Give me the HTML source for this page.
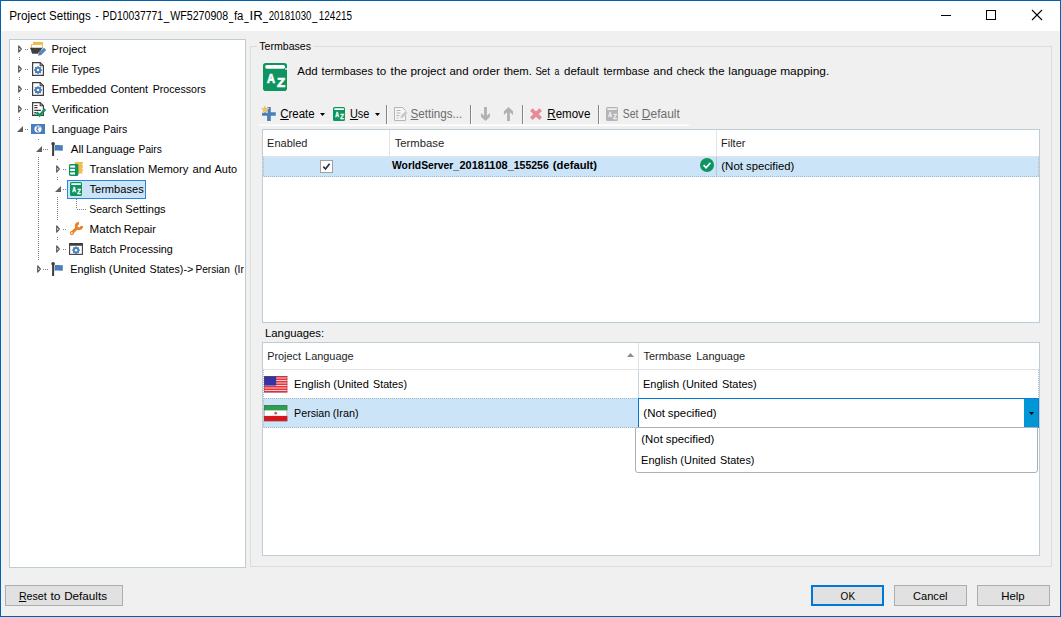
<!DOCTYPE html>
<html lang="en">
<head>
<meta charset="utf-8">
<title>Project Settings</title>
<style>
html,body{margin:0;padding:0;}
body{width:1061px;height:617px;overflow:hidden;background:#f0f0f0;font-family:"Liberation Sans",sans-serif;font-size:11.5px;color:#000;}
#page{position:absolute;left:0;top:0;width:1061px;height:617px;overflow:hidden;background:#f0f0f0;}
header,nav,main,section,footer{display:block;position:static;margin:0;padding:0;}
.a{position:absolute;}
.t{position:absolute;white-space:pre;line-height:14px;font-size:11.5px;transform-origin:0 0;display:block;}
.t u{text-decoration:none;border-bottom:1px solid currentColor;display:inline-block;height:12px;}
svg{position:absolute;overflow:visible;}
.clip{position:absolute;overflow:hidden;}
</style>
</head>
<body>
<div id="page">
<header id="titlebar">
<div class="a" style="left:0px;top:0px;width:1061px;height:617px;box-sizing:border-box;border:1px solid #0063b1;"></div>
<div class="a" style="left:1px;top:1px;width:1059px;height:30px;background:#fff;"></div>
<div class="l"><span class="t" style="left:9px;top:9px;transform:matrix(0.9813,0,0,1,0.18,0);font-size:12px;">Project </span><span class="t" style="left:49px;top:9px;transform:matrix(0.9620,0,0,1,0.08,0);font-size:12px;">Settings </span><span class="t" style="left:95px;top:9px;transform:matrix(0.7996,0,0,1,0.61,0);font-size:12px;">- </span><span class="t" style="left:102px;top:9px;transform:matrix(0.8620,0,0,1,0.54,0);font-size:12px;">PD10037771</span><span class="t" style="left:163px;top:9px;transform:matrix(0.8218,0,0,1,0.64,0);font-size:12px;">_</span><span class="t" style="left:170px;top:9px;transform:matrix(0.8873,0,0,1,0.2,0);font-size:12px;">WF5270908</span><span class="t" style="left:228px;top:9px;transform:matrix(0.6347,0,0,1,0.96,0);font-size:12px;">_</span><span class="t" style="left:233px;top:9px;transform:matrix(0.9519,0,0,1,0.9,0);font-size:12px;">fa</span><span class="t" style="left:244px;top:9px;transform:matrix(0.6569,0,0,1,0.36,0);font-size:12px;">_</span><span class="t" style="left:249px;top:9px;transform:matrix(1.0936,0,0,1,0.52,0);font-size:12px;">IR</span><span class="t" style="left:262px;top:9px;transform:matrix(0.7416,0,0,1,0.9,0);font-size:12px;">_</span><span class="t" style="left:268px;top:9px;transform:matrix(0.7998,0,0,1,0.66,0);font-size:12px;">20181030</span><span class="t" style="left:312px;top:9px;transform:matrix(0.7549,0,0,1,0.14,0);font-size:12px;">_</span><span class="t" style="left:318px;top:9px;transform:matrix(0.8283,0,0,1,0.8,0);font-size:12px;">124215</span></div>
<svg style="left:0px;top:0px" width="1061" height="31" viewBox="0 0 1061 31" preserveAspectRatio="none"><path d="M941 15.5h10" stroke="#000" stroke-width="1" fill="none"/><rect x="986.5" y="10.5" width="9" height="9" stroke="#000" stroke-width="1" fill="none"/><path d="M1032 10l10 10M1042 10l-10 10" stroke="#000" stroke-width="1.1" fill="none"/></svg>
</header>
<nav id="settings-tree" role="tree">
<div class="a" style="left:9px;top:39px;width:237px;height:529px;background:#fff;box-sizing:border-box;border:1px solid #becdd5;"></div>
<div class="a" style="left:67px;top:180px;width:79px;height:19px;background:#cce4f7;box-sizing:border-box;border:1px solid #2586dc;"></div>
<svg style="left:18px;top:44px" width="5" height="10" viewBox="0 0 5 10" preserveAspectRatio="none"><path d="M0.7 1.9L3.3 5L0.7 8.1z" fill="#fff" stroke="#5a5a5a" stroke-width="1.2" stroke-linejoin="round"/></svg>
<svg style="left:30px;top:41px" width="16" height="16" viewBox="0 0 16 16" preserveAspectRatio="none"><path d="M3 0.9h10v3H3z" fill="#efc050"/><path d="M4 1.75h1.3M6.1 1.75h1.3M8.2 1.75h1.3" stroke="#d9a83a" stroke-width="0.7"/><path d="M1.55 7V3.55h10.9V7" fill="#fff" stroke="#efc050" stroke-width="1.1"/><path d="M0 6.8h12.4v0.9h-0.6l-1.3 4.4q-0.2 0.6-0.8 0.6H2.6q-0.6 0-0.8-0.6L0.6 7.7H0z" fill="#3f3f3f"/><path d="M8.1 14.8l0.9-3.1 5-5 2.2 2.2-5 5z" fill="#4a7ebb" stroke="#fff" stroke-width="0.9" paint-order="stroke"/><path d="M10.1 11l2 2M11.5 9.6l2 2M12.9 8.2l2 2" stroke="#86a9d3" stroke-width="0.5"/></svg>
<div class="l"><span class="t" style="left:51px;top:42px;transform:matrix(0.9652,0,0,1,0.51,0);">Project</span></div>
<svg style="left:18px;top:64px" width="5" height="10" viewBox="0 0 5 10" preserveAspectRatio="none"><path d="M0.7 1.9L3.3 5L0.7 8.1z" fill="#fff" stroke="#5a5a5a" stroke-width="1.2" stroke-linejoin="round"/></svg>
<svg style="left:30px;top:61px" width="16" height="16" viewBox="0 0 16 16" preserveAspectRatio="none"><path d="M2.6 1.6h7.6l3.2 3.2v9.6H2.6z" fill="#fff" stroke="#3f3f3f" stroke-width="1.2"/><path d="M10.2 1.6v3.2h3.2" fill="none" stroke="#3f3f3f" stroke-width="1.1"/><circle cx="8" cy="9.1" r="2.3" fill="none" stroke="#4a7ebb" stroke-width="1.84"/><g stroke="#4a7ebb" stroke-width="1.61"><path d="M8 5.14V13.06" transform="rotate(0 8 9.1)"/><path d="M8 5.14V13.06" transform="rotate(45 8 9.1)"/><path d="M8 5.14V13.06" transform="rotate(90 8 9.1)"/><path d="M8 5.14V13.06" transform="rotate(135 8 9.1)"/></g><circle cx="8" cy="9.1" r="1.26" fill="#fff"/></svg>
<div class="l"><span class="t" style="left:51px;top:62px;transform:matrix(0.9291,0,0,1,0.51,0);">File Types</span></div>
<svg style="left:18px;top:84px" width="5" height="10" viewBox="0 0 5 10" preserveAspectRatio="none"><path d="M0.7 1.9L3.3 5L0.7 8.1z" fill="#fff" stroke="#5a5a5a" stroke-width="1.2" stroke-linejoin="round"/></svg>
<svg style="left:30px;top:81px" width="16" height="16" viewBox="0 0 16 16" preserveAspectRatio="none"><path d="M2.6 1.6h7.6l3.2 3.2v9.6H2.6z" fill="#fff" stroke="#3f3f3f" stroke-width="1.2"/><path d="M10.2 1.6v3.2h3.2" fill="none" stroke="#3f3f3f" stroke-width="1.1"/><circle cx="8" cy="9.1" r="2.3" fill="none" stroke="#4a7ebb" stroke-width="1.84"/><g stroke="#4a7ebb" stroke-width="1.61"><path d="M8 5.14V13.06" transform="rotate(0 8 9.1)"/><path d="M8 5.14V13.06" transform="rotate(45 8 9.1)"/><path d="M8 5.14V13.06" transform="rotate(90 8 9.1)"/><path d="M8 5.14V13.06" transform="rotate(135 8 9.1)"/></g><circle cx="8" cy="9.1" r="1.26" fill="#fff"/></svg>
<div class="l"><span class="t" style="left:51px;top:82px;transform:matrix(0.9874,0,0,1,0.42,0);">Embedded </span><span class="t" style="left:110px;top:82px;transform:matrix(0.9352,0,0,1,0.41,0);">Content </span><span class="t" style="left:152px;top:82px;transform:matrix(0.9214,0,0,1,0.71,0);">Processors</span></div>
<svg style="left:18px;top:104px" width="5" height="10" viewBox="0 0 5 10" preserveAspectRatio="none"><path d="M0.7 1.9L3.3 5L0.7 8.1z" fill="#fff" stroke="#5a5a5a" stroke-width="1.2" stroke-linejoin="round"/></svg>
<svg style="left:30px;top:101px" width="16" height="16" viewBox="0 0 16 16" preserveAspectRatio="none"><path d="M2.6 1.6h7.6l3.2 3.2v9.6H2.6z" fill="#fff" stroke="#3f3f3f" stroke-width="1.2"/><path d="M10.2 1.6v3.2h3.2" fill="none" stroke="#3f3f3f" stroke-width="1.1"/><path d="M4.3 4.5h3.2M4.3 6.6h3.2M4.3 9.4h6.6M4.3 11.6h2M4.3 13.2h1.2" stroke="#3f3f3f" stroke-width="1.1"/><path d="M6.6 11.3l3 3.2 5.6-6.4" fill="none" stroke="#0d945f" stroke-width="2.5"/></svg>
<div class="l"><span class="t" style="left:51px;top:102px;transform:matrix(1.0094,0,0,1,0.98,0);">Verification</span></div>
<svg style="left:17px;top:126px" width="6" height="6" viewBox="0 0 6 6" preserveAspectRatio="none"><path d="M6 0V6H0z" fill="#5f5f5f"/></svg>
<svg style="left:30px;top:121px" width="16" height="16" viewBox="0 0 16 16" preserveAspectRatio="none"><rect x="1" y="3" width="14" height="10" fill="#4a7ebb"/><circle cx="8" cy="8" r="3.6" fill="#fff"/><path d="M6.4 5.6c2.2 0.4 2 1.6 0.8 2.2s0.4 1.6 1.6 2.8" stroke="#4a7ebb" stroke-width="1.2" fill="none"/><path d="M9.4 5.2l0.8 1.6" stroke="#4a7ebb" stroke-width="0.9" fill="none"/></svg>
<div class="l"><span class="t" style="left:51px;top:122px;transform:matrix(0.9396,0,0,1,0.87,0);">Language </span><span class="t" style="left:103px;top:122px;transform:matrix(0.9116,0,0,1,0.26,0);">Pairs</span></div>
<svg style="left:36px;top:146px" width="6" height="6" viewBox="0 0 6 6" preserveAspectRatio="none"><path d="M6 0V6H0z" fill="#5f5f5f"/></svg>
<svg style="left:50px;top:141px" width="16" height="16" viewBox="0 0 16 16" preserveAspectRatio="none"><circle cx="3.1" cy="2.7" r="1.8" fill="#3f3f3f"/><rect x="2.1" y="2.7" width="2" height="12.3" fill="#3f3f3f"/><path d="M4.6 4.3c2.6-0.9 5 0.5 8.2-0.4v5.6c-3.2 0.9-5.6-0.5-8.2 0.4z" fill="#4a7ebb"/></svg>
<div class="l"><span class="t" style="left:70px;top:142px;transform:matrix(1.0041,0,0,1,0.79,0);">All </span><span class="t" style="left:86px;top:142px;transform:matrix(0.9546,0,0,1,0.01,0);">Language </span><span class="t" style="left:138px;top:142px;transform:matrix(0.8856,0,0,1,0.59,0);">Pairs</span></div>
<svg style="left:56px;top:164px" width="5" height="10" viewBox="0 0 5 10" preserveAspectRatio="none"><path d="M0.7 1.9L3.3 5L0.7 8.1z" fill="#fff" stroke="#5a5a5a" stroke-width="1.2" stroke-linejoin="round"/></svg>
<svg style="left:68px;top:161px" width="16" height="16" viewBox="0 0 16 16" preserveAspectRatio="none"><path d="M6.6 1h8.4v1.6a1 1 0 0 0 0 2v1.8a1 1 0 0 0 0 2v1.8a1 1 0 0 0 0 2v0.4h-8.4z" fill="#efc050"/><rect x="1" y="3" width="9.4" height="12" rx="1.4" fill="#0d945f"/><rect x="2.2" y="4.5" width="4.8" height="2.1" fill="#fff"/><rect x="2.2" y="7.95" width="4.8" height="2.1" fill="#fff"/><rect x="2.2" y="11.4" width="4.8" height="2.1" fill="#fff"/></svg>
<div class="l"><span class="t" style="left:89px;top:162px;transform:matrix(0.9739,0,0,1,0.41,0);">Translation </span><span class="t" style="left:147px;top:162px;transform:matrix(0.9765,0,0,1,0.88,0);">Memory </span><span class="t" style="left:192px;top:162px;transform:matrix(0.9745,0,0,1,0.52,0);">and </span><span class="t" style="left:214px;top:162px;transform:matrix(0.9484,0,0,1,0.58,0);">Auto</span></div>
<svg style="left:55px;top:186px" width="6" height="6" viewBox="0 0 6 6" preserveAspectRatio="none"><path d="M6 0V6H0z" fill="#5f5f5f"/></svg>
<svg style="left:68px;top:181px" width="16" height="16" viewBox="0 0 16 16" preserveAspectRatio="none"><rect x="2" y="1" width="12" height="14" rx="1.5" fill="#0d945f"/><rect x="3.2" y="2.15" width="9.8" height="1.75" rx="0.6" fill="#fff"/><g style="font:bold 7px 'Liberation Sans',sans-serif" fill="#fff" stroke="#fff" stroke-width="0.35"><text x="4.2" y="11.1" textLength="3.7" lengthAdjust="spacingAndGlyphs">A</text><text x="9.2" y="12.8" textLength="3.6" lengthAdjust="spacingAndGlyphs">Z</text></g></svg>
<div class="l"><span class="t" style="left:89px;top:182px;transform:matrix(0.9650,0,0,1,0.41,0);">Termbases</span></div>
<div class="l"><span class="t" style="left:89px;top:202px;transform:matrix(0.9121,0,0,1,0.16,0);">Search </span><span class="t" style="left:125px;top:202px;transform:matrix(0.9700,0,0,1,0.36,0);">Settings</span></div>
<svg style="left:56px;top:224px" width="5" height="10" viewBox="0 0 5 10" preserveAspectRatio="none"><path d="M0.7 1.9L3.3 5L0.7 8.1z" fill="#fff" stroke="#5a5a5a" stroke-width="1.2" stroke-linejoin="round"/></svg>
<svg style="left:68px;top:221px" width="16" height="16" viewBox="0 0 16 16" preserveAspectRatio="none"><path d="M3.9 12L9.4 6.5" stroke="#e98024" stroke-width="3" stroke-linecap="butt" fill="none"/><circle cx="3.85" cy="12.1" r="2.05" fill="#e98024"/><path d="M13.75 5.10A2.75 2.75 0 1 1 11.00 2.35" stroke="#e98024" stroke-width="2.7" fill="none"/><circle cx="3.85" cy="12.1" r="0.9" fill="#fff"/></svg>
<div class="l"><span class="t" style="left:89px;top:222px;transform:matrix(1.0085,0,0,1,0.58,0);">Match </span><span class="t" style="left:123px;top:222px;transform:matrix(0.9421,0,0,1,0.83,0);">Repair</span></div>
<svg style="left:56px;top:244px" width="5" height="10" viewBox="0 0 5 10" preserveAspectRatio="none"><path d="M0.7 1.9L3.3 5L0.7 8.1z" fill="#fff" stroke="#5a5a5a" stroke-width="1.2" stroke-linejoin="round"/></svg>
<svg style="left:68px;top:241px" width="16" height="16" viewBox="0 0 16 16" preserveAspectRatio="none"><rect x="1.6" y="2.6" width="12.8" height="10.8" fill="#fff" stroke="#3f3f3f" stroke-width="1.1"/><rect x="1.05" y="2.15" width="13.9" height="2.6" fill="#3f3f3f"/><circle cx="8.05" cy="9.2" r="2.2" fill="none" stroke="#4a7ebb" stroke-width="1.76"/><g stroke="#4a7ebb" stroke-width="1.54"><path d="M8.05 5.42V12.98" transform="rotate(0 8.05 9.2)"/><path d="M8.05 5.42V12.98" transform="rotate(45 8.05 9.2)"/><path d="M8.05 5.42V12.98" transform="rotate(90 8.05 9.2)"/><path d="M8.05 5.42V12.98" transform="rotate(135 8.05 9.2)"/></g><circle cx="8.05" cy="9.2" r="1.21" fill="#fff"/></svg>
<div class="l"><span class="t" style="left:89px;top:242px;transform:matrix(0.9051,0,0,1,0.67,0);">Batch </span><span class="t" style="left:119px;top:242px;transform:matrix(0.9347,0,0,1,0.57,0);">Processing</span></div>
<svg style="left:37px;top:264px" width="5" height="10" viewBox="0 0 5 10" preserveAspectRatio="none"><path d="M0.7 1.9L3.3 5L0.7 8.1z" fill="#fff" stroke="#5a5a5a" stroke-width="1.2" stroke-linejoin="round"/></svg>
<svg style="left:50px;top:261px" width="16" height="16" viewBox="0 0 16 16" preserveAspectRatio="none"><circle cx="3.1" cy="2.7" r="1.8" fill="#3f3f3f"/><rect x="2.1" y="2.7" width="2" height="12.3" fill="#3f3f3f"/><path d="M4.6 4.3c2.6-0.9 5 0.5 8.2-0.4v5.6c-3.2 0.9-5.6-0.5-8.2 0.4z" fill="#4a7ebb"/></svg>
<div class="clip" style="left:0;top:259px;width:244px;height:20px;">
<div class="l"><span class="t" style="left:70px;top:3px;transform:matrix(0.9406,0,0,1,0.35,0);">English </span><span class="t" style="left:108px;top:3px;transform:matrix(0.9878,0,0,1,0.86,0);">(United </span><span class="t" style="left:149px;top:3px;transform:matrix(0.9288,0,0,1,0.53,0);">States)</span><span class="t" style="left:183px;top:3px;transform:matrix(0.9419,0,0,1,0.44,0);">-&gt;</span><span class="t" style="left:195px;top:3px;transform:matrix(0.8815,0,0,1,0.4,0);">Persian </span><span class="t" style="left:234px;top:3px;transform:matrix(0.9004,0,0,1,0.16,0);">(Ir</span></div></div>
<svg style="left:0px;top:0px" width="260" height="300" viewBox="0 0 260 300" preserveAspectRatio="none"><g fill="#808080" shape-rendering="crispEdges"><rect x="25" y="49" width="1" height="1"/><rect x="27" y="49" width="1" height="1"/><rect x="25" y="69" width="1" height="1"/><rect x="27" y="69" width="1" height="1"/><rect x="25" y="89" width="1" height="1"/><rect x="27" y="89" width="1" height="1"/><rect x="25" y="109" width="1" height="1"/><rect x="27" y="109" width="1" height="1"/><rect x="25" y="129" width="1" height="1"/><rect x="27" y="129" width="1" height="1"/><rect x="43" y="149" width="1" height="1"/><rect x="45" y="149" width="1" height="1"/><rect x="47" y="149" width="1" height="1"/><rect x="63" y="169" width="1" height="1"/><rect x="65" y="169" width="1" height="1"/><rect x="63" y="189" width="1" height="1"/><rect x="65" y="189" width="1" height="1"/><rect x="63" y="229" width="1" height="1"/><rect x="65" y="229" width="1" height="1"/><rect x="63" y="249" width="1" height="1"/><rect x="65" y="249" width="1" height="1"/><rect x="43" y="269" width="1" height="1"/><rect x="45" y="269" width="1" height="1"/><rect x="47" y="269" width="1" height="1"/><rect x="19" y="57" width="1" height="1"/><rect x="19" y="59" width="1" height="1"/><rect x="19" y="77" width="1" height="1"/><rect x="19" y="79" width="1" height="1"/><rect x="19" y="97" width="1" height="1"/><rect x="19" y="99" width="1" height="1"/><rect x="19" y="117" width="1" height="1"/><rect x="19" y="119" width="1" height="1"/><rect x="38" y="139" width="1" height="1"/><rect x="38" y="157" width="1" height="1"/><rect x="38" y="159" width="1" height="1"/><rect x="38" y="161" width="1" height="1"/><rect x="38" y="163" width="1" height="1"/><rect x="38" y="165" width="1" height="1"/><rect x="38" y="167" width="1" height="1"/><rect x="38" y="169" width="1" height="1"/><rect x="38" y="171" width="1" height="1"/><rect x="38" y="173" width="1" height="1"/><rect x="38" y="175" width="1" height="1"/><rect x="38" y="177" width="1" height="1"/><rect x="38" y="179" width="1" height="1"/><rect x="38" y="181" width="1" height="1"/><rect x="38" y="183" width="1" height="1"/><rect x="38" y="185" width="1" height="1"/><rect x="38" y="187" width="1" height="1"/><rect x="38" y="189" width="1" height="1"/><rect x="38" y="191" width="1" height="1"/><rect x="38" y="193" width="1" height="1"/><rect x="38" y="195" width="1" height="1"/><rect x="38" y="197" width="1" height="1"/><rect x="38" y="199" width="1" height="1"/><rect x="38" y="201" width="1" height="1"/><rect x="38" y="203" width="1" height="1"/><rect x="38" y="205" width="1" height="1"/><rect x="38" y="207" width="1" height="1"/><rect x="38" y="209" width="1" height="1"/><rect x="38" y="211" width="1" height="1"/><rect x="38" y="213" width="1" height="1"/><rect x="38" y="215" width="1" height="1"/><rect x="38" y="217" width="1" height="1"/><rect x="38" y="219" width="1" height="1"/><rect x="38" y="221" width="1" height="1"/><rect x="38" y="223" width="1" height="1"/><rect x="38" y="225" width="1" height="1"/><rect x="38" y="227" width="1" height="1"/><rect x="38" y="229" width="1" height="1"/><rect x="38" y="231" width="1" height="1"/><rect x="38" y="233" width="1" height="1"/><rect x="38" y="235" width="1" height="1"/><rect x="38" y="237" width="1" height="1"/><rect x="38" y="239" width="1" height="1"/><rect x="38" y="241" width="1" height="1"/><rect x="38" y="243" width="1" height="1"/><rect x="38" y="245" width="1" height="1"/><rect x="38" y="247" width="1" height="1"/><rect x="38" y="249" width="1" height="1"/><rect x="38" y="251" width="1" height="1"/><rect x="38" y="253" width="1" height="1"/><rect x="38" y="255" width="1" height="1"/><rect x="38" y="257" width="1" height="1"/><rect x="38" y="259" width="1" height="1"/><rect x="57" y="159" width="1" height="1"/><rect x="57" y="177" width="1" height="1"/><rect x="57" y="179" width="1" height="1"/><rect x="57" y="197" width="1" height="1"/><rect x="57" y="237" width="1" height="1"/><rect x="57" y="239" width="1" height="1"/><rect x="57" y="199" width="1" height="1"/><rect x="57" y="201" width="1" height="1"/><rect x="57" y="203" width="1" height="1"/><rect x="57" y="205" width="1" height="1"/><rect x="57" y="207" width="1" height="1"/><rect x="57" y="209" width="1" height="1"/><rect x="57" y="211" width="1" height="1"/><rect x="57" y="213" width="1" height="1"/><rect x="57" y="215" width="1" height="1"/><rect x="57" y="217" width="1" height="1"/><rect x="57" y="219" width="1" height="1"/><rect x="76" y="199" width="1" height="1"/><rect x="76" y="201" width="1" height="1"/><rect x="76" y="203" width="1" height="1"/><rect x="76" y="205" width="1" height="1"/><rect x="76" y="207" width="1" height="1"/><rect x="77" y="209" width="1" height="1"/><rect x="79" y="209" width="1" height="1"/><rect x="81" y="209" width="1" height="1"/><rect x="83" y="209" width="1" height="1"/><rect x="85" y="209" width="1" height="1"/></g></svg>
</nav>
<main id="termbases-page">
<section id="intro">
<div class="a" style="left:250px;top:46px;width:802px;height:521px;box-sizing:border-box;border:1px solid #dcdcdc;"></div>
<div class="a" style="left:257px;top:40px;width:56px;height:14px;background:#f0f0f0;"></div>
<div class="l"><span class="t" style="left:259px;top:39px;transform:matrix(0.9176,0,0,1,0.32,0);">Termbases</span></div>
<svg style="left:263px;top:63px" width="24" height="28" viewBox="0 0 24 28" preserveAspectRatio="none"><rect width="24" height="28" rx="2.8" fill="#0d945f"/><rect x="2.1" y="2.1" width="20" height="3.7" rx="1.8" fill="#fff"/><rect x="22.1" y="5.2" width="1.9" height="1.4" fill="#f4faf7"/><g style="font:bold 13.7px 'Liberation Sans',sans-serif" fill="#fff" stroke="#fff" stroke-width="0.7"><text x="4" y="19.9" textLength="8" lengthAdjust="spacingAndGlyphs">A</text><text x="14" y="23.8" textLength="8.2" lengthAdjust="spacingAndGlyphs">Z</text></g></svg>
<div class="l"><span class="t" style="left:297px;top:64px;transform:matrix(0.9936,0,0,1,0.35,0);">Add </span><span class="t" style="left:321px;top:64px;transform:matrix(0.9567,0,0,1,0.57,0);">termbases </span><span class="t" style="left:376px;top:64px;transform:matrix(1.0090,0,0,1,0.57,0);">to </span><span class="t" style="left:390px;top:64px;transform:matrix(1.0256,0,0,1,0.62,0);">the </span><span class="t" style="left:410px;top:64px;transform:matrix(1.0201,0,0,1,0.45,0);">project </span><span class="t" style="left:449px;top:64px;transform:matrix(0.9924,0,0,1,0.45,0);">and </span><span class="t" style="left:472px;top:64px;transform:matrix(1.0229,0,0,1,0.39,0);">order </span><span class="t" style="left:503px;top:64px;transform:matrix(0.9801,0,0,1,0.69,0);">them. </span><span class="t" style="left:535px;top:64px;transform:matrix(0.8344,0,0,1,0.44,0);">Set </span><span class="t" style="left:554px;top:64px;transform:matrix(0.7587,0,0,1,0.48,0);">a </span><span class="t" style="left:564px;top:64px;transform:matrix(1.0001,0,0,1,0.04,0);">default </span><span class="t" style="left:603px;top:64px;transform:matrix(0.9551,0,0,1,0.5,0);">termbase </span><span class="t" style="left:653px;top:64px;transform:matrix(0.9980,0,0,1,0.36,0);">and </span><span class="t" style="left:676px;top:64px;transform:matrix(0.9436,0,0,1,0.43,0);">check </span><span class="t" style="left:708px;top:64px;transform:matrix(0.9901,0,0,1,0.68,0);">the </span><span class="t" style="left:728px;top:64px;transform:matrix(1.0236,0,0,1,0.31,0);">language </span><span class="t" style="left:780px;top:64px;transform:matrix(1.0369,0,0,1,0.19,0);">mapping.</span></div>
</section>
<div id="toolbar" role="toolbar">
<div class="a" style="left:259px;top:124px;width:430px;height:1px;background:#f8f9fb;"></div>
<div class="a" style="left:259px;top:125px;width:430px;height:1px;background:#fff;"></div>
<div class="a" style="left:386px;top:105px;width:1px;height:19px;background:#858585;"></div>
<div class="a" style="left:387px;top:105px;width:1px;height:19px;background:#fafafa;"></div>
<div class="a" style="left:470px;top:105px;width:1px;height:19px;background:#858585;"></div>
<div class="a" style="left:471px;top:105px;width:1px;height:19px;background:#fafafa;"></div>
<div class="a" style="left:522px;top:105px;width:1px;height:19px;background:#858585;"></div>
<div class="a" style="left:523px;top:105px;width:1px;height:19px;background:#fafafa;"></div>
<div class="a" style="left:598px;top:105px;width:1px;height:19px;background:#858585;"></div>
<div class="a" style="left:599px;top:105px;width:1px;height:19px;background:#fafafa;"></div>
<svg style="left:261px;top:105px" width="16" height="16" viewBox="0 0 16 16" preserveAspectRatio="none"><path d="M6.1 2h3.7v5.2h5v3.5h-5v5.2H6.1v-5.2H1V7.2h5.1z" fill="#4a7ebb" stroke="#f7f3ec" stroke-width="1.2" paint-order="stroke"/><path d="M3.95 0.55L5.07 3.01L7.75 3.31L5.76 5.14L6.30 7.79L3.95 6.45L1.60 7.79L2.14 5.14L0.15 3.31L2.83 3.01z" fill="#e9c265" stroke="#f3ecdc" stroke-width="1" paint-order="stroke"/></svg>
<div class="l"><span class="t" style="left:280px;top:107px;transform:matrix(0.9557,0,0,1,0.21,0);font-size:12px;"><u>C</u>reate</span></div>
<svg style="left:320px;top:113px" width="5" height="3" viewBox="0 0 5 3" preserveAspectRatio="none"><path d="M0 0h5L2.5 3z" fill="#000"/></svg>
<svg style="left:331px;top:106px" width="16" height="16" viewBox="0 0 16 16" preserveAspectRatio="none"><rect x="2" y="1" width="12" height="14" rx="1.5" fill="#0d945f"/><rect x="3.2" y="2.15" width="9.8" height="1.75" rx="0.6" fill="#fff"/><g style="font:bold 7px 'Liberation Sans',sans-serif" fill="#fff" stroke="#fff" stroke-width="0.35"><text x="4.2" y="11.1" textLength="3.7" lengthAdjust="spacingAndGlyphs">A</text><text x="9.2" y="12.8" textLength="3.6" lengthAdjust="spacingAndGlyphs">Z</text></g></svg>
<div class="l"><span class="t" style="left:349px;top:107px;transform:matrix(0.9107,0,0,1,0.95,0);font-size:12px;"><u>U</u>se</span></div>
<svg style="left:375px;top:113px" width="5" height="3" viewBox="0 0 5 3" preserveAspectRatio="none"><path d="M0 0h5L2.5 3z" fill="#000"/></svg>
<svg style="left:393px;top:106px" width="16" height="16" viewBox="0 0 16 16" preserveAspectRatio="none"><path d="M1.5 1.5h8l3 3v10h-11z" fill="#f6f6f6" stroke="#b4b4b4"/><path d="M3.5 4.5h4M3.5 7h4M3.5 9.5h3M3.5 12h2" stroke="#b4b4b4"/><path d="M7 12.6l0.9-3 4.6-4.6 2.1 2.1-4.6 4.6z" fill="#c6c6c6" stroke="#f0f0f0" stroke-width="0.5"/></svg>
<div class="l"><span class="t" style="left:410px;top:107px;transform:matrix(0.9684,0,0,1,0.61,0);font-size:12px;color:#6d6d6d;"><u>S</u>ettings...</span></div>
<svg style="left:480px;top:106px" width="11" height="16" viewBox="0 0 11 16" preserveAspectRatio="none"><path d="M4.1 1H6.9V9.8L9.9 6.9V10.8L5.5 15L1 10.8V6.9L4.1 9.8z" fill="#b1b1b1"/></svg>
<svg style="left:503px;top:106px" width="11" height="16" viewBox="0 0 11 16" preserveAspectRatio="none"><path d="M5.5 1L10 5.3V9.1L6.9 6.2V15H4.1V6.2L0.9 9.1V5.3z" fill="#b1b1b1"/></svg>
<svg style="left:529px;top:107px" width="14" height="14" viewBox="0 0 14 14" preserveAspectRatio="none"><path d="M2.3 2.600l9.4 9M11.7 2.600l-9.4 9" stroke="#e8899a" stroke-width="3.6" fill="none"/></svg>
<div class="l"><span class="t" style="left:547px;top:107px;transform:matrix(0.9609,0,0,1,0.36,0);font-size:12px;"><u>R</u>emove</span></div>
<svg style="left:604px;top:106px" width="16" height="16" viewBox="0 0 16 16" preserveAspectRatio="none"><rect x="2" y="1" width="12" height="14" rx="1.5" fill="#b4b4b4"/><rect x="3.2" y="2.15" width="9.8" height="1.75" rx="0.6" fill="#f0f0f0"/><g style="font:bold 7px 'Liberation Sans',sans-serif" fill="#f0f0f0" stroke="#f0f0f0" stroke-width="0.35"><text x="4.2" y="11.1" textLength="3.7" lengthAdjust="spacingAndGlyphs">A</text><text x="9.2" y="12.8" textLength="3.6" lengthAdjust="spacingAndGlyphs">Z</text></g></svg>
<div class="l"><span class="t" style="left:622px;top:107px;transform:matrix(0.8670,0,0,1,0.69,0);font-size:12px;color:#6d6d6d;">Set </span><span class="t" style="left:641px;top:107px;transform:matrix(0.9989,0,0,1,0.84,0);font-size:12px;color:#6d6d6d;"><u>D</u>efault</span></div>
</div>
<section id="termbase-grid" role="grid">
<div class="a" style="left:262px;top:129px;width:778px;height:194px;background:#fff;box-sizing:border-box;border:1px solid #becdd5;"></div>
<div class="a" style="left:263px;top:156px;width:776px;height:1px;background:#e3e3e3;"></div>
<div class="a" style="left:389px;top:130px;width:1px;height:26px;background:#e3e3e3;"></div>
<div class="a" style="left:716px;top:130px;width:1px;height:26px;background:#e3e3e3;"></div>
<div class="a" style="left:263px;top:157px;width:776px;height:20px;background:#cce4f7;"></div>
<div class="a" style="left:263px;top:176px;width:776px;height:1px;background:repeating-linear-gradient(90deg,transparent 0 1px,#abb8c2 1px 2px);"></div>
<div class="a" style="left:263px;top:157px;width:1px;height:19px;background:repeating-linear-gradient(180deg,#b3c0ca 0 1px,transparent 1px 2px);"></div>
<div class="a" style="left:1038px;top:157px;width:1px;height:19px;background:repeating-linear-gradient(180deg,#b3c0ca 0 1px,transparent 1px 2px);"></div>
<div class="a" style="left:716px;top:157px;width:1px;height:19px;background:#b9c6d2;"></div>
<div class="l"><span class="t" style="left:267px;top:136px;transform:matrix(0.9554,0,0,1,0.08,0);color:#1e1e1e;">Enabled</span></div>
<div class="l"><span class="t" style="left:394px;top:136px;transform:matrix(0.9809,0,0,1,0.67,0);color:#1e1e1e;">Termbase</span></div>
<div class="l"><span class="t" style="left:721px;top:136px;transform:matrix(0.9470,0,0,1,0.12,0);color:#1e1e1e;">Filter</span></div>
<svg style="left:320px;top:160px" width="13" height="13" viewBox="0 0 13 13" preserveAspectRatio="none"><rect x="0.5" y="0.5" width="12" height="12" fill="#fff" stroke="#a0a0a0"/><path d="M3.3 6.6l2.2 2.4L9.6 3.7" fill="none" stroke="#333" stroke-width="1.7"/></svg>
<div class="l"><span class="t" style="left:392px;top:158px;transform:matrix(0.8984,0,0,1,0.05,0);font-weight:bold;">WorldServer_</span><span class="t" style="left:459px;top:158px;transform:matrix(0.9519,0,0,1,0.53,0);font-weight:bold;">20181108_</span><span class="t" style="left:513px;top:158px;transform:matrix(0.9135,0,0,1,0.74,0);font-weight:bold;">155256 </span><span class="t" style="left:552px;top:158px;transform:matrix(0.9754,0,0,1,0.83,0);font-weight:bold;">(default)</span></div>
<svg style="left:700px;top:158px" width="14" height="14" viewBox="0 0 14 14" preserveAspectRatio="none"><circle cx="7" cy="7" r="7" fill="#0d945f"/><path d="M3.6 7.2l2.4 2.5 4.4-4.8" fill="none" stroke="#fff" stroke-width="1.7"/></svg>
<div class="l"><span class="t" style="left:721px;top:159px;transform:matrix(1.0051,0,0,1,0.24,0);">(Not </span><span class="t" style="left:746px;top:159px;transform:matrix(0.9809,0,0,1,0.02,0);">specified)</span></div>
</section>
<section id="language-grid" role="grid">
<div class="l"><span class="t" style="left:265px;top:326px;transform:matrix(0.9827,0,0,1,0.03,0);">Languages:</span></div>
<div class="a" style="left:262px;top:342px;width:778px;height:214px;background:#fff;box-sizing:border-box;border:1px solid #becdd5;"></div>
<div class="a" style="left:263px;top:369px;width:776px;height:1px;background:#e3e3e3;"></div>
<div class="a" style="left:638px;top:343px;width:1px;height:26px;background:#e3e3e3;"></div>
<div class="a" style="left:638px;top:370px;width:1px;height:28px;background:#c5d3dd;"></div>
<div class="l"><span class="t" style="left:267px;top:349px;transform:matrix(0.9424,0,0,1,0.21,0);color:#1e1e1e;">Project </span><span class="t" style="left:305px;top:349px;transform:matrix(0.9465,0,0,1,0.11,0);color:#1e1e1e;">Language</span></div>
<div class="l"><span class="t" style="left:643px;top:349px;transform:matrix(0.9464,0,0,1,0.56,0);color:#1e1e1e;">Termbase </span><span class="t" style="left:696px;top:349px;transform:matrix(0.9576,0,0,1,0.15,0);color:#1e1e1e;">Language</span></div>
<svg style="left:627px;top:353px" width="7" height="4" viewBox="0 0 7 4" preserveAspectRatio="none"><path d="M0 4L3.5 0L7 4z" fill="#8c8c8c"/></svg>
<div class="a" style="left:263px;top:398px;width:375px;height:30px;background:#cce4f7;"></div>
<div class="a" style="left:263px;top:398px;width:375px;height:1px;background:repeating-linear-gradient(90deg,transparent 0 1px,#abb8c2 1px 2px);"></div>
<div class="a" style="left:263px;top:427px;width:375px;height:1px;background:repeating-linear-gradient(90deg,transparent 0 1px,#abb8c2 1px 2px);"></div>
<div class="a" style="left:263px;top:370px;width:1px;height:58px;background:repeating-linear-gradient(180deg,#b3c0ca 0 1px,transparent 1px 2px);"></div>
<div class="a" style="left:1038px;top:370px;width:1px;height:28px;background:repeating-linear-gradient(180deg,#b3c0ca 0 1px,transparent 1px 2px);"></div>
<svg style="left:264.4px;top:375.6px" width="23.4" height="16.5" viewBox="0 0 24 16" preserveAspectRatio="none"><rect width="24" height="16" fill="#fbd5d5"/><g fill="#e8343c"><rect y="0" width="24" height="1.5"/><rect y="2.4" width="24" height="1.5"/><rect y="4.85" width="24" height="1.5"/><rect y="7.25" width="24" height="1.5"/><rect y="9.7" width="24" height="1.5"/><rect y="12.1" width="24" height="1.5"/><rect y="14.5" width="24" height="1.5"/></g><rect width="12.5" height="9.3" fill="#3434a4"/><rect x="0.5" y="0.5" width="23" height="15" fill="none" stroke="#7a4a5a" stroke-opacity="0.45"/></svg>
<svg style="left:264.4px;top:404.8px" width="23.4" height="16.3" viewBox="0 0 24 16" preserveAspectRatio="none"><rect width="24" height="16" fill="#fff"/><rect width="24" height="5.3" fill="#2f9e4f"/><rect y="10.7" width="24" height="5.3" fill="#d8141c"/><circle cx="12" cy="8" r="1.4" fill="#e0505a"/><rect x="0.5" y="0.5" width="23" height="15" fill="none" stroke="#5a5a5a" stroke-opacity="0.4"/></svg>
<div class="l"><span class="t" style="left:294px;top:377px;transform:matrix(0.9595,0,0,1,0.08,0);">English </span><span class="t" style="left:333px;top:377px;transform:matrix(0.9555,0,0,1,0.33,0);">(United </span><span class="t" style="left:373px;top:377px;transform:matrix(0.9312,0,0,1,0.02,0);">States)</span></div>
<div class="l"><span class="t" style="left:642px;top:377px;transform:matrix(0.9603,0,0,1,0.93,0);">English </span><span class="t" style="left:682px;top:377px;transform:matrix(0.9488,0,0,1,0.36,0);">(United </span><span class="t" style="left:721px;top:377px;transform:matrix(0.9540,0,0,1,1,0);">States)</span></div>
<div class="l"><span class="t" style="left:294px;top:406px;transform:matrix(0.9257,0,0,1,0.11,0);">Persian </span><span class="t" style="left:332px;top:406px;transform:matrix(0.9431,0,0,1,0.66,0);">(Iran)</span></div>
<div class="a" style="left:638px;top:398px;width:401px;height:30px;background:#fff;box-sizing:border-box;border:1px solid #0078d7;"></div>
<div class="a" style="left:1024px;top:398px;width:15px;height:30px;background:#0097d7;box-sizing:border-box;border:1px solid #0a7dd4;border-left:0;border-bottom:0;"></div>
<svg style="left:1029px;top:412px" width="5" height="3" viewBox="0 0 5 3" preserveAspectRatio="none"><path d="M0 0h5L2.5 3z" fill="#000"/></svg>
<div class="l"><span class="t" style="left:643px;top:406px;transform:matrix(0.9949,0,0,1,0.35,0);">(Not </span><span class="t" style="left:667px;top:406px;transform:matrix(0.9903,0,0,1,0.81,0);">specified)</span></div>
<div class="a" style="left:635px;top:427px;width:403px;height:46px;background:#fff;box-sizing:border-box;border:1px solid #b0b0b0;border-radius:2px 0 3px 3px;"></div>
<div class="l"><span class="t" style="left:641px;top:432px;transform:matrix(0.9875,0,0,1,0.34,0);">(Not </span><span class="t" style="left:665px;top:432px;transform:matrix(0.9894,0,0,1,0.71,0);">specified)</span></div>
<div class="l"><span class="t" style="left:641px;top:453px;transform:matrix(0.9595,0,0,1,0.08,0);">English </span><span class="t" style="left:680px;top:453px;transform:matrix(0.9555,0,0,1,0.33,0);">(United </span><span class="t" style="left:720px;top:453px;transform:matrix(0.9443,0,0,1,0.02,0);">States)</span></div>
</section>
</main>
<footer id="dialog-buttons">
<div class="a" style="left:5px;top:585px;width:118px;height:21px;background:#e1e1e1;box-sizing:border-box;border:1px solid #adadad;"></div>
<div class="l"><span class="t" style="left:18px;top:589px;transform:matrix(0.9240,0,0,1,0.91,0);"><u>R</u>eset </span><span class="t" style="left:50px;top:589px;transform:matrix(1.0446,0,0,1,0.39,0);">to </span><span class="t" style="left:64px;top:589px;transform:matrix(1.0145,0,0,1,0.18,0);">Defaults</span></div>
<div class="a" style="left:811px;top:585px;width:73px;height:21px;background:#e1e1e1;box-sizing:border-box;border:2px solid #0078d7;"></div>
<div class="l"><span class="t" style="left:840px;top:589px;transform:matrix(0.8703,0,0,1,0.62,0);">OK</span></div>
<div class="a" style="left:894px;top:585px;width:73px;height:21px;background:#e1e1e1;box-sizing:border-box;border:1px solid #adadad;"></div>
<div class="l"><span class="t" style="left:913px;top:589px;transform:matrix(0.9647,0,0,1,0.02,0);">Cancel</span></div>
<div class="a" style="left:977px;top:585px;width:73px;height:21px;background:#e1e1e1;box-sizing:border-box;border:1px solid #adadad;"></div>
<div class="l"><span class="t" style="left:1001px;top:589px;transform:matrix(0.9922,0,0,1,0.23,0);">Help</span></div>
</footer>
</div>
</body>
</html>
